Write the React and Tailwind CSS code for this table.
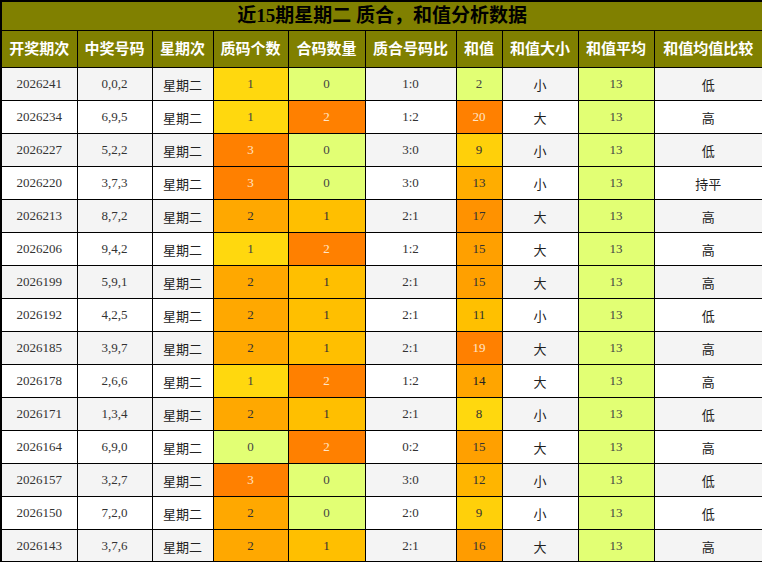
import React from 'react';

const rows = [
  ['2026241', '0,0,2', 1, 0, '1:0', 2, '小', '低'],
  ['2026234', '6,9,5', 1, 2, '1:2', 20, '大', '高'],
  ['2026227', '5,2,2', 3, 0, '3:0', 9, '小', '低'],
  ['2026220', '3,7,3', 3, 0, '3:0', 13, '小', '持平'],
  ['2026213', '8,7,2', 2, 1, '2:1', 17, '大', '高'],
  ['2026206', '9,4,2', 1, 2, '1:2', 15, '大', '高'],
  ['2026199', '5,9,1', 2, 1, '2:1', 15, '大', '高'],
  ['2026192', '4,2,5', 2, 1, '2:1', 11, '小', '低'],
  ['2026185', '3,9,7', 2, 1, '2:1', 19, '大', '高'],
  ['2026178', '2,6,6', 1, 2, '1:2', 14, '大', '高'],
  ['2026171', '1,3,4', 2, 1, '2:1', 8, '小', '低'],
  ['2026164', '6,9,0', 0, 2, '0:2', 15, '大', '高'],
  ['2026157', '3,2,7', 3, 0, '3:0', 12, '小', '低'],
  ['2026150', '7,2,0', 2, 0, '2:0', 9, '小', '低'],
  ['2026143', '3,7,6', 2, 1, '2:1', 16, '大', '高'],
];

const headers = ['开奖期次', '中奖号码', '星期次', '质码个数', '合码数量', '质合号码比', '和值', '和值大小', '和值平均', '和值均值比较'];
const widths = ['w-[76px]', 'w-[75px]', 'w-[61px]', 'w-[75px]', 'w-[77px]', 'w-[91px]', 'w-[46px]', 'w-[76px]', 'w-[76px]', 'w-[109px]'];

// colour per count (质码 / 合码)
const countColor = {
  0: 'bg-[#e2ff74] text-[#444]',
  1: 'bg-[#ffd80e] text-[#444]',
  2: 'bg-[#ffa800] text-[#333]',
  3: 'bg-[#ff8000] text-[#ffe6c8]',
};
const heColor = {
  0: 'bg-[#e2ff74] text-[#444]',
  1: 'bg-[#ffbf00] text-[#333]',
  2: 'bg-[#ff8000] text-[#ffe6c8]',
  3: 'bg-[#ff8000] text-[#ffe6c8]',
};
const sumColor = {
  2: 'bg-[#e2ff74] text-[#444]',
  8: 'bg-[#ffd80e] text-[#333]',
  9: 'bg-[#ffd00a] text-[#333]',
  11: 'bg-[#ffc000] text-[#333]',
  12: 'bg-[#ffb500] text-[#333]',
  13: 'bg-[#ffad00] text-[#333]',
  14: 'bg-[#ffa500] text-[#222]',
  15: 'bg-[#ffa000] text-[#333]',
  16: 'bg-[#ff9c00] text-[#333]',
  17: 'bg-[#ff9200] text-[#333]',
  19: 'bg-[#ff8000] text-[#ffe6c8]',
  20: 'bg-[#ff8000] text-[#ffe6c8]',
};

const serif = "font-['Liberation_Serif','Noto_Sans_CJK_SC',serif]";
const cjk = "font-['Noto_Sans_CJK_SC',sans-serif]";

export default function App() {
  return (
    <div className="w-[762px] h-[562px] bg-white overflow-hidden">
      <table className="w-[762px] table-fixed border-collapse border-2 border-black">
        <colgroup>
          {widths.map((w, i) => (
            <col key={i} className={w} />
          ))}
        </colgroup>
        <thead>
          <tr className="h-[29px] bg-[#808000]">
            <th colSpan={10} className={`border border-black text-[19px] leading-[25px] font-bold text-black ${serif}`}>
              近15期星期二 质合，和值分析数据
            </th>
          </tr>
          <tr className="h-[37px] bg-[#808000]">
            {headers.map((h) => (
              <th key={h} className={`border border-black text-[15px] font-bold text-white whitespace-nowrap ${cjk}`}>
                {h}
              </th>
            ))}
          </tr>
        </thead>
        <tbody>
          {rows.map((r, i) => {
            const bg = i % 2 === 0 ? 'bg-[#f4f4f4]' : 'bg-white';
            const num = `border border-black text-center text-[13px] ${serif}`;
            const zh = `border border-black text-center text-[13px] text-[#222] ${cjk}`;
            return (
              <tr key={r[0]} className="h-[33px]">
                <td className={`${num} ${bg} text-[#333]`}>{r[0]}</td>
                <td className={`${num} ${bg} text-[#333]`}>{r[1]}</td>
                <td className={`${zh} ${bg} pt-[3px]`}>星期二</td>
                <td className={`${num} ${countColor[r[2]]}`}>{r[2]}</td>
                <td className={`${num} ${heColor[r[3]]}`}>{r[3]}</td>
                <td className={`${num} ${bg} text-[#333]`}>{r[4]}</td>
                <td className={`${num} ${sumColor[r[5]]}`}>{r[5]}</td>
                <td className={`${zh} ${bg} pt-[3px]`}>{r[6]}</td>
                <td className={`${num} bg-[#e2ff74] text-[#444]`}>13</td>
                <td className={`${zh} ${bg} pt-[3px]`}>{r[7]}</td>
              </tr>
            );
          })}
        </tbody>
      </table>
    </div>
  );
}
